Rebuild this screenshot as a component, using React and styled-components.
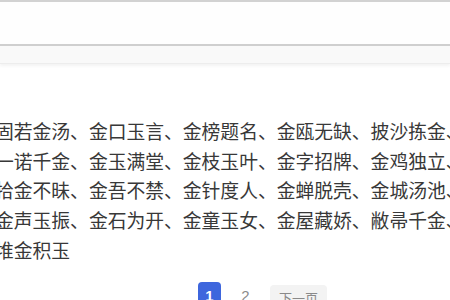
import React from "react";
import styled, { createGlobalStyle } from "styled-components";

const Global = createGlobalStyle`
  html, body { margin: 0; padding: 0; background: #fff; }
  body { width: 450px; height: 300px; overflow: hidden; font-family: "Noto Sans CJK SC", "Noto Sans", sans-serif; }
`;

const Page = styled.div`
  width: 450px;
  height: 300px;
  overflow: hidden;
  display: flex;
  flex-direction: column;
`;

const SearchBar = styled.div`
  height: 42px;
  margin: 0 -20px;
  border-top: 2px solid #d2d2d2;
  border-bottom: 2px solid #cfcfcf;
  background: #fefefe;
  flex-shrink: 0;
`;

const Band = styled.div`
  height: 17px;
  background: #f9f9f9;
  border-bottom: 1px solid #ededed;
  box-shadow: 0 2px 3px rgba(0, 0, 0, 0.05);
  flex-shrink: 0;
`;

const Words = styled.p`
  margin: 52px 0 0 -5px;
  width: 472px;
  font-size: 18.8px;
  line-height: 29.7px;
  color: #383838;
  flex-shrink: 0;
`;

const Pager = styled.div`
  display: flex;
  align-items: center;
  gap: 13px;
  margin-top: 15px;
  padding-left: 198px;
  flex-shrink: 0;
`;

const PageBtn = styled.div`
  height: 26px;
  min-width: ${(p) => (p.$wide ? "57px" : "23px")};
  border-radius: 4px;
  display: flex;
  align-items: center;
  justify-content: center;
  font-family: ${(p) => (p.$wide ? '"Noto Sans CJK SC", sans-serif' : '"Liberation Sans", Arial, sans-serif')};
  font-size: ${(p) => (p.$wide ? "13px" : "15px")};
  font-weight: ${(p) => (p.$active ? 700 : 400)};
  color: ${(p) => (p.$active ? "#fff" : "#8a8a8a")};
  background: ${(p) => (p.$active ? "#3e66dd" : p.$wide ? "#f3f3f3" : "transparent")};
  margin-top: ${(p) => (p.$wide ? "5px" : "0")};
`;

const text =
  "固若金汤、金口玉言、金榜题名、金瓯无缺、披沙拣金、一诺千金、金玉满堂、金枝玉叶、金字招牌、金鸡独立、拾金不昧、金吾不禁、金针度人、金蝉脱壳、金城汤池、金声玉振、金石为开、金童玉女、金屋藏娇、敝帚千金、堆金积玉";

export default function App() {
  return (
    <Page>
      <Global />
      <SearchBar />
      <Band />
      <Words>{text}</Words>
      <Pager>
        <PageBtn $active>1</PageBtn>
        <PageBtn>2</PageBtn>
        <PageBtn $wide>下一页</PageBtn>
      </Pager>
    </Page>
  );
}
